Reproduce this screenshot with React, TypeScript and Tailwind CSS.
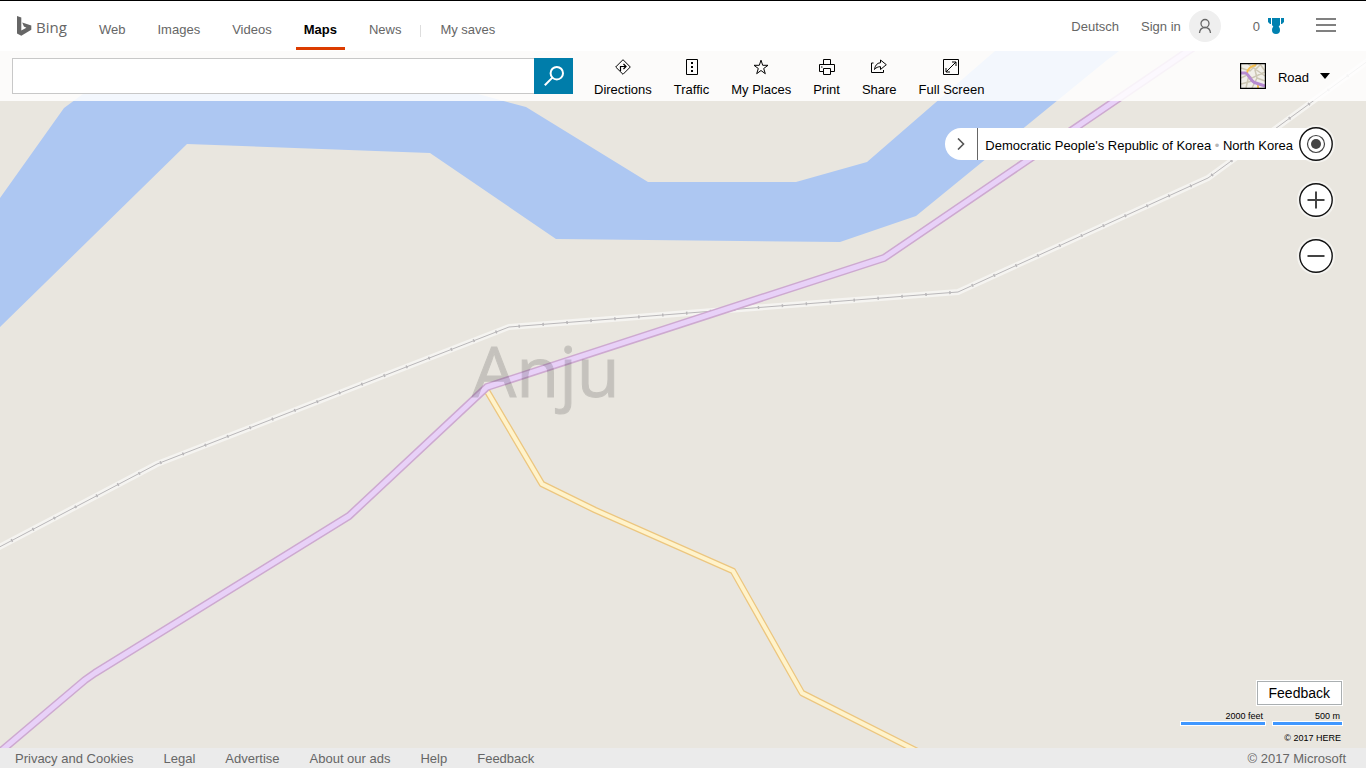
import type { ReactNode } from 'react';

const navLinks = ['Web', 'Images', 'Videos', 'Maps', 'News'];
const footerLinks = ['Privacy and Cookies', 'Legal', 'Advertise', 'About our ads', 'Help', 'Feedback'];

const rail = '-10,552 157,464 509,327 958,292 1208,178 1376,55';
const highway = '-6,757 85,680 95,673 349,516 487,387 884,258 1200,43';
const road = '487,391 542,484 595,510 733,571 802,693 925,755';

function MapCanvas() {
  return (
    <svg
      className="absolute inset-0 h-full w-full"
      viewBox="0 51 1366 697"
      preserveAspectRatio="xMidYMid slice"
      role="img"
      aria-label="Map of Anju"
    >
      <rect x="-500" y="-500" width="2400" height="1800" fill="#e9e6df" />
      <path
        d="M-5 205L64 108L83 94L478 94L526 107L648 182H796L867 162L995 51H1119L1107 60L916 216L840 242L556 239L430 153L187 144L-5 332Z"
        fill="#adc7f2"
      />
      <g fill="none" strokeLinejoin="round">
        <polyline points={rail} stroke="#f5f4f1" strokeWidth="6" />
        <polyline points={rail} stroke="#b9b7b9" strokeWidth="1" />
        <polyline points={rail} stroke="#b9b7b9" strokeWidth="3" strokeDasharray="1.5 22.5" />
        <polyline points={road} stroke="#ecc67f" strokeWidth="6.5" />
        <polyline points={road} stroke="#fff3cb" strokeWidth="4" />
        <polyline points={highway} stroke="#cda9d0" strokeWidth="8" />
        <polyline points={highway} stroke="#e8d1f8" strokeWidth="5" />
      </g>
      <text
        x="472"
        y="397"
        fontSize="70"
        fill="#000"
        stroke="#000"
        strokeWidth="1"
        opacity="0.15"
        fontFamily="'Open Sans', 'Noto Sans', sans-serif"
      >
        Anju
      </text>
    </svg>
  );
}

function Tool({ label, children }: { label: string; children: ReactNode }) {
  return (
    <button type="button" className="flex flex-col items-center gap-[7px] whitespace-nowrap text-black">
      <svg className="h-4 w-4" viewBox="0 0 16 16" fill="none" stroke="#000" strokeWidth="1" aria-hidden="true">
        {children}
      </svg>
      <span className="leading-4">{label}</span>
    </button>
  );
}

function RoundButton({ label, children }: { label: string; children: ReactNode }) {
  return (
    <button
      type="button"
      aria-label={label}
      className="relative flex h-[34px] w-[34px] shrink-0 rounded-full bg-white ring-2 ring-white/50"
    >
      <svg className="h-[34px] w-[34px]" viewBox="-1 -1 34 34" fill="none" stroke="#444" strokeWidth="2" aria-hidden="true">
        <circle cx="16" cy="16" r="16.2" stroke="#111" strokeWidth="1.4" />
        {children}
      </svg>
    </button>
  );
}

function ScaleBar({ label, bar }: { label: string; bar: string }) {
  return (
    <div className="flex flex-col items-end">
      <span className="pr-0.5 leading-3">{label}</span>
      <div className={bar} />
    </div>
  );
}

function Header() {
  return (
    <header className="flex h-[51px] shrink-0 items-stretch border-t border-black bg-white pr-[30px] pl-4 text-[#666]">
      <a href="#" aria-label="Bing" className="flex w-[52px] items-start pt-3.5">
        <svg className="h-[21px] w-4 shrink-0" viewBox="0 0 16 21" aria-hidden="true">
          <path d="M1 1L5.3 2.5V15.6L10.4 12.7L7.9 11.5L6.2 7.5L15.3 10.6V14.8L5.3 20.8L1 18.4Z" fill="#666" />
        </svg>
        <span className="ml-1 font-['Open_Sans','Noto_Sans',sans-serif] text-[15px] leading-6">Bing</span>
      </a>
      <nav className="ml-[23px] flex items-stretch gap-4">
        {navLinks.map((item) => (
          <a
            key={item}
            href="#"
            aria-current={item === 'Maps' ? 'page' : undefined}
            className={
              item === 'Maps'
                ? 'mb-px border-b-3 border-[#dc3c00] px-2 pt-[21px] leading-4 font-bold text-black'
                : 'px-2 pt-[21px] leading-4'
            }
          >
            {item}
          </a>
        ))}
      </nav>
      <span className="mt-6 ml-[11px] h-3 w-px bg-[#ddd]" />
      <a href="#" className="ml-[19px] pt-[21px] leading-4 whitespace-nowrap">
        My saves
      </a>
      <div className="ml-auto flex items-center whitespace-nowrap">
        <a href="#" className="pt-px">
          Deutsch
        </a>
        <a href="#" className="ml-[22px] flex items-center gap-2">
          <span className="pt-px">Sign in</span>
          <span className="flex h-8 w-8 items-center justify-center rounded-full bg-[#efefef]">
            <svg className="h-4 w-4" viewBox="0 0 16 16" fill="none" stroke="#666" strokeWidth="1.3" aria-hidden="true">
              <circle cx="8" cy="5.5" r="4" />
              <path d="M2.5 15C2.8 11.8 5 9.5 8 9.5S13.2 11.8 13.5 15" />
            </svg>
          </span>
        </a>
        <a href="#" className="ml-8 flex items-center gap-2" aria-label="0 rewards">
          <span className="pt-px">0</span>
          <svg className="h-4 w-4" viewBox="0 0 16 16" fill="#0081b0" aria-hidden="true">
            <path d="M0 0H3V6H2L0 4ZM4 0H12V7L10.5 9H5.5L4 7ZM13 0H16V4L14 6H13Z" />
            <circle cx="8" cy="12" r="4" />
          </svg>
        </a>
        <button type="button" aria-label="Menu" className="mr-0 mb-0.5 ml-8 flex w-5 flex-col gap-1">
          <span className="h-0.5 w-5 bg-[#808080]" />
          <span className="h-0.5 w-5 bg-[#808080]" />
          <span className="h-0.5 w-5 bg-[#808080]" />
        </button>
      </div>
    </header>
  );
}

function Toolbar() {
  return (
    <div className="relative flex h-[50px] shrink-0 items-start bg-white/85 pt-[7px] pr-9 pl-3">
      <form className="flex h-9 max-w-[561px] flex-1" onSubmit={(e) => e.preventDefault()}>
        <input
          type="text"
          aria-label="Search the map"
          className="min-w-0 flex-1 border border-r-0 border-[#c8c8c8] bg-white px-2 outline-none"
        />
        <button type="submit" aria-label="Search" className="flex w-[39px] items-center justify-center bg-[#007daa]">
          <svg className="h-5 w-5" viewBox="0 0 20 20" fill="none" stroke="#fff" strokeWidth="2" aria-hidden="true">
            <circle cx="12.8" cy="7.2" r="6.2" />
            <path d="M8.4 11.6L0.8 19.2" />
          </svg>
        </button>
      </form>
      <div className="ml-[21px] flex gap-[22px] pt-px">
        <Tool label="Directions">
          <path d="M8 0.7L15.3 8L8 15.3L0.7 8Z" />
          <path d="M5.5 12V7.5H10.5M8.5 5L11 7.5L8.5 10" strokeWidth="1.2" />
        </Tool>
        <Tool label="Traffic">
          <path d="M2.5 0.5H13.5V15.5H2.5Z" />
          <path d="M7 4H9M7 8H9M7 12H9" strokeWidth="2" />
        </Tool>
        <Tool label="My Places">
          <path d="M8 1.2L9.7 6.3H15L10.7 9.5L12.3 14.7L8 11.5L3.7 14.7L5.3 9.5L1 6.3H6.3Z" />
        </Tool>
        <Tool label="Print">
          <path d="M4.5 5.5V0.5H11.5V5.5M4.5 12.5H0.5V5.5H15.5V12.5H11.5M4.5 9.5H11.5V15.5H4.5ZM2 8H3.5" />
        </Tool>
        <Tool label="Share">
          <path d="M2.5 4H0.5V13.5H12.5V11" />
          <path d="M9.5 1L15.3 5.7L9.5 10.5V7.7C7 7.7 5 8.5 3.5 10.5C4 6.5 6 4 9.5 3.7Z" />
        </Tool>
        <Tool label="Full Screen">
          <path d="M0.5 0.5H15.5V15.5H0.5ZM3 13L13 3M9 3H13V7M3 9V13H7" />
        </Tool>
      </div>
      <button type="button" className="mt-[5px] ml-auto flex items-center text-black">
        <svg className="h-[26px] w-[26px]" viewBox="0 0 26 26" fill="none" aria-hidden="true">
          <path d="M0 0H26V26H0Z" fill="#f1efe9" />
          <path
            d="M1 5L10 8L17 1M8 1L25 13M1 15L7 12L12 15L25 9M6 25L9 12M12 25L17 15L15 7L20 2M17 15L25 18M1 21L12 18M20 1L25 8"
            stroke="#cdc7b4"
            strokeWidth="1.5"
          />
          <path d="M7 10C8 5 11 3 16 2M18 25V21" stroke="#f6bf4f" strokeWidth="2" />
          <path d="M1 10H5C9 10 10 19 16 20L25 23" stroke="#b78bd0" strokeWidth="3" />
          <path d="M0.5 0.5H25.5V25.5H0.5Z" stroke="#000" strokeWidth="1.4" />
        </svg>
        <span className="ml-3 pt-1">Road</span>
        <svg className="ml-[11px] h-1.5 w-2.5" viewBox="0 0 10 6" aria-hidden="true">
          <path d="M0 0H10L5 6Z" />
        </svg>
      </button>
    </div>
  );
}

export default function App() {
  return (
    <div className="flex min-h-screen flex-col bg-[#e9e6df] font-['Liberation_Sans',Arial,sans-serif] text-[13px] leading-4">
      <Header />
      <main className="relative flex flex-1 flex-col overflow-hidden">
        <MapCanvas />
        <Toolbar />
        <div className="relative flex flex-col items-end gap-[22px] pt-[26px] pr-[33px]">
          <div className="flex items-center">
            <div className="-mr-[17px] flex h-8 items-center rounded-l-full bg-white pr-[23px] text-black">
              <button
                type="button"
                aria-label="Expand location"
                className="flex h-8 w-[33px] items-center justify-center border-r border-[#666]"
              >
                <svg className="h-3 w-2" viewBox="0 0 8 12" fill="none" stroke="#555" strokeWidth="1.6" aria-hidden="true">
                  <path d="M1 0.5L6.5 6L1 11.5" />
                </svg>
              </button>
              <span className="pt-1 pl-[7px] whitespace-nowrap">
                Democratic People's Republic of Korea <span className="text-[#b5b5b5]">•</span> North Korea
              </span>
            </div>
            <RoundButton label="Locate me">
              <circle cx="16" cy="16" r="8.5" strokeWidth="1.2" />
              <circle cx="16" cy="16" r="5" fill="#444" stroke="none" />
            </RoundButton>
          </div>
          <RoundButton label="Zoom in">
            <path d="M7.5 16H24.5M16 7.5V24.5" />
          </RoundButton>
          <RoundButton label="Zoom out">
            <path d="M7.5 16H24.5" />
          </RoundButton>
        </div>
        <div className="relative mt-auto flex flex-col items-end pr-6 pb-1 text-[9px] text-black">
          <button type="button" className="h-6 border border-[#aaafb1] bg-white px-[11px] text-sm leading-5 ring-1 ring-white">
            Feedback
          </button>
          <div className="mt-[5px] flex gap-2">
            <ScaleBar label="2000 feet" bar="h-[3px] w-[84px] bg-[#3f97ff] ring-1 ring-white" />
            <ScaleBar label="500 m" bar="h-[3px] w-[69px] bg-[#3f97ff] ring-1 ring-white" />
          </div>
          <span className="mt-[7px] pr-px leading-3">© 2017 HERE</span>
        </div>
      </main>
      <footer className="flex h-5 shrink-0 items-center gap-[30px] bg-[#ebebeb] pt-0.5 pr-5 pl-[15px] whitespace-nowrap text-[#666]">
        {footerLinks.map((item) => (
          <a key={item} href="#">
            {item}
          </a>
        ))}
        <span className="ml-auto">© 2017 Microsoft</span>
      </footer>
    </div>
  );
}
